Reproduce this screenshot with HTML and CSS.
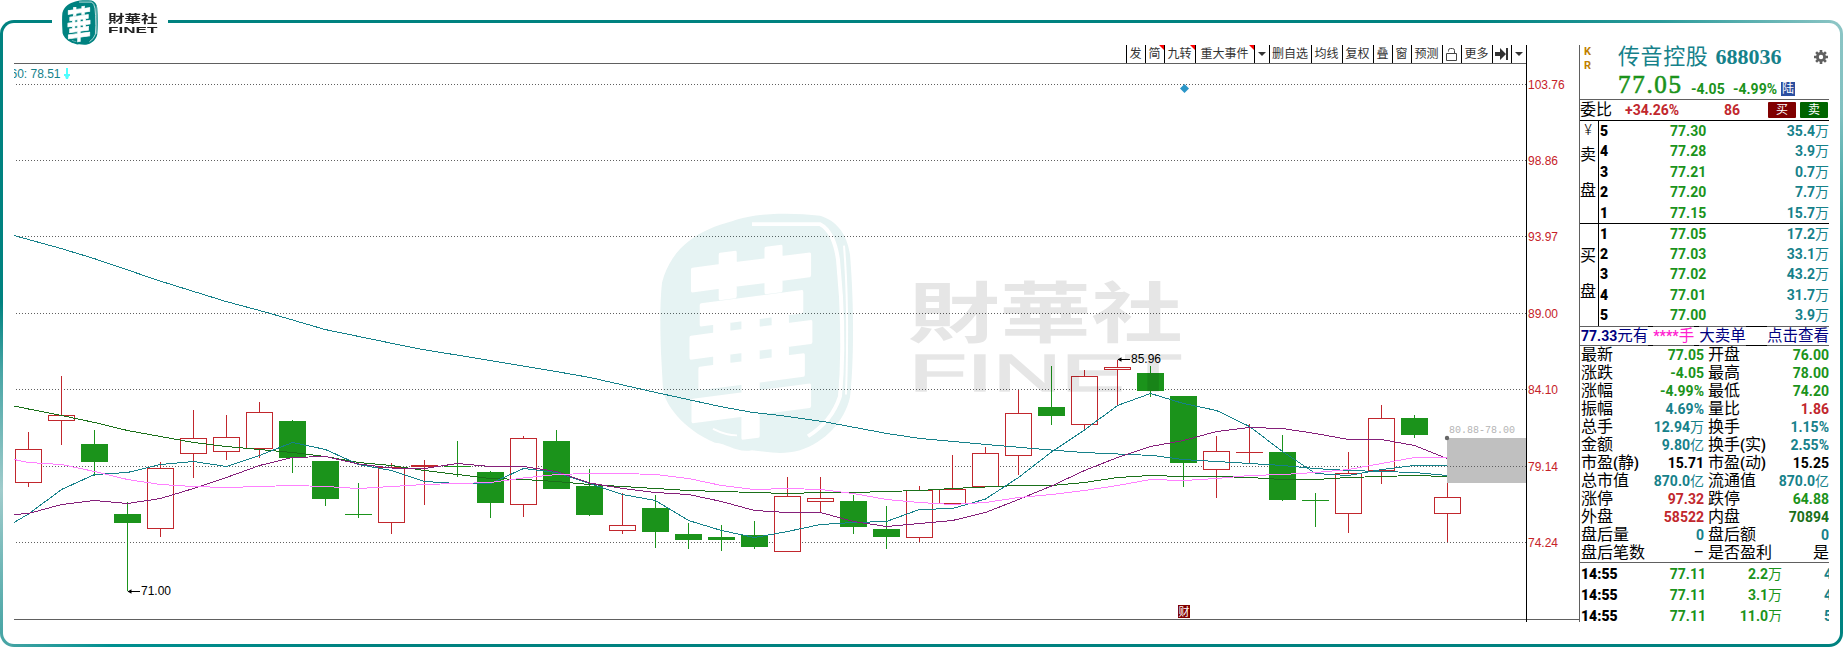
FILE: index.html
```html
<!DOCTYPE html>
<html lang="zh-CN">
<head>
    <meta charset="UTF-8" />
    <meta name="viewport" content="width=device-width, initial-scale=1" />
    <title>传音控股 688036</title>
    <link rel="stylesheet" href="styles.css">
</head>
<body>
    <svg class="defs" width="0" height="0">
        <defs>
            <mask id="sealMask">
                <path fill="#fff" d="M72 9 C92 0 130 -1 160 3 C176 8 187 22 190 45 C195 110 193 170 190 198 C184 225 165 246 140 255 C120 261 105 256 92 255 C76 258 68 248 55 247 C22 232 5 205 3 190 L1 150 C0 120 0 95 2 75 C12 35 40 18 72 9 Z" />
                <g transform="translate(91 0) skewY(-8) scale(.88 1.42)">
                    <text class="seal-char" x="0" y="156" text-anchor="middle">華</text>
                </g>
                <path fill="none" stroke="#000" stroke-width="4" d="M92 12 H160 Q174 20 178 50 L181 90 Q184 150 180 197 Q172 224 148 240" />
                <path fill="none" stroke="#000" stroke-width="2" d="M184 35 Q189 100 186 195 M53 232 Q66 239 77 239" />
            </mask>
            <g id="seal">
                <rect width="194" height="259" mask="url(#sealMask)" />
            </g>
        </defs>
    </svg>

    <div class="frame">
        <div class="brand">
            <svg class="brand-seal" width="36" height="45" viewBox="0 0 194 259" preserveAspectRatio="none"><use href="#seal" /></svg>
            <div class="brand-name">
                <span class="brand-cn">財華社</span>
                <span class="brand-en">FINET</span>
            </div>
        </div>

        <div class="terminal">
            <div class="chart">
                <div class="toolbar">
                    <span class="tool w19">发</span>
                    <span class="tool w19 hot">简</span>
                    <span class="tool w31 hot">九转</span>
                    <span class="tool w59 hot">重大事件</span>
                    <span class="tool w15"><i class="caret"></i></span>
                    <span class="tool w42">删自选</span>
                    <span class="tool w31">均线</span>
                    <span class="tool w31">复权</span>
                    <span class="tool w19">叠</span>
                    <span class="tool w19">窗</span>
                    <span class="tool w31">预测</span>
                    <span class="tool w19"><svg width="13" height="15" viewBox="0 0 13 15"><path class="icon-line" d="M1.5 6.5h10v7h-10zM3.5 4.5v-1q0-2 2-2h2q2 0 2 2v3" /></svg></span>
                    <span class="tool w31">更多</span>
                    <span class="tool w19"><svg width="14" height="12" viewBox="0 0 14 12"><path class="icon-fill" d="M0 4h5V0l6 6-6 6V8H0zM11 0h2v12h-2z" /></svg></span>
                    <span class="tool w15"><i class="caret"></i></span>
                </div>
                <svg id="kline" class="kline" width="1565" height="559" viewBox="14 63 1565 559">
                    <path class="rule" d="M14 63.5H1526M14 619.5H1579" />
                    <rect class="gap" x="1447" y="438" width="79" height="45" />
                    <g id="grid"></g>
                    <g id="candles"></g>
                    <g id="averages"></g>
                    <path class="axis" d="M1526.5 63V622" />
                    <circle class="gap-dot" cx="1447" cy="438" r="2.2" />
                    <text class="gap-text" x="1449" y="433">80.88-78.00</text>
                    <path class="mark" d="M128 591.5H140M1118 359.5H1130" />
                    <path class="mark-head" d="M127.500 591.5l4-2.200v4.400zM1117.500 359.5l4-2.200v4.400z" />
                    <text class="note" x="141" y="595">71.00</text>
                    <text class="note" x="1131" y="363">85.96</text>
                    <text class="ma-text" x="10.500" y="78">60: 78.51</text>
                    <path class="ma-arrow" d="M66 68h2v6h2v2h-1l-1 3h-2l-1-3h-1v-2h2z" />
                    <path class="diamond" d="M1184.500 84l4.500 4.500-4.500 4.500-4.500-4.500z" />
                    <rect class="report" x="1178" y="605" width="12" height="13" />
                    <text class="report-text" x="1178.500" y="615.500">财</text>
                    <g class="watermark">
                        <svg x="660" y="213" width="194" height="241" viewBox="0 0 194 259" preserveAspectRatio="none" class="wm-seal"><use href="#seal" /></svg>
                        <text class="wm-cn" x="908" y="337" textLength="275" lengthAdjust="spacingAndGlyphs">財華社</text>
                        <text class="wm-en" x="909" y="391" textLength="273" lengthAdjust="spacingAndGlyphs">FINET</text>
                    </g>
                </svg>
            </div>

            <div class="quote">
                <div class="head">
                    <div class="flags"><span>K</span><span>R</span></div>
                    <div class="title">
                        <div class="name"><span>传音控股</span><b>688036</b></div>
                        <div class="price"><span class="last">77.05</span><span class="chg">-4.05</span><span class="pct">-4.99%</span><span class="tag">陆</span></div>
                    </div>
                    <svg class="gear" width="14" height="14" viewBox="-7 -7 14 14">
                        <circle r="3.600" fill="none" stroke="#606060" stroke-width="2.800" />
                        <path stroke="#606060" stroke-width="2.600" d="M0-7v3M0 7v-3M-7 0h3M7 0h-3M-4.900-4.900l2 2M4.900 4.900l-2-2M-4.900 4.900l2-2M4.900-4.900l-2 2" />
                    </svg>
                </div>
                <div class="ratio"><span class="cjk">委比</span><span class="red wb">+34.26%</span><span class="red wc">86</span><span class="btn buy">买</span><span class="btn sell">卖</span></div>

                <div class="book asks">
                    <div class="side"><small>¥</small><span>卖</span><span>盘</span></div>
                    <div class="levels">
                        <div class="level"><b>5</b><span>77.30</span><em>35.4<i>万</i></em></div>
                        <div class="level"><b>4</b><span>77.28</span><em>3.9<i>万</i></em></div>
                        <div class="level"><b>3</b><span>77.21</span><em>0.7<i>万</i></em></div>
                        <div class="level"><b>2</b><span>77.20</span><em>7.7<i>万</i></em></div>
                        <div class="level"><b>1</b><span>77.15</span><em>15.7<i>万</i></em></div>
                    </div>
                </div>
                <div class="book bids">
                    <div class="side"><span>买</span><span>盘</span></div>
                    <div class="levels">
                        <div class="level"><b>1</b><span>77.05</span><em>17.2<i>万</i></em></div>
                        <div class="level"><b>2</b><span>77.03</span><em>33.1<i>万</i></em></div>
                        <div class="level"><b>3</b><span>77.02</span><em>43.2<i>万</i></em></div>
                        <div class="level"><b>4</b><span>77.01</span><em>31.7<i>万</i></em></div>
                        <div class="level"><b>5</b><span>77.00</span><em>3.9<i>万</i></em></div>
                    </div>
                </div>

                <div class="alert"><b>77.33</b><span>元有</span><u></u><span class="hidden-lots"><b>****</b>手</span><u></u><span>大卖单</span><u class="long"></u><span>点击查看</span></div>

                <div class="stats">
                    <div><label>最新</label><span class="green">77.05</span></div><div><label>开盘</label><span class="green">76.00</span></div>
                    <div><label>涨跌</label><span class="green">-4.05</span></div><div><label>最高</label><span class="green">78.00</span></div>
                    <div><label>涨幅</label><span class="green">-4.99%</span></div><div><label>最低</label><span class="green">74.20</span></div>
                    <div><label>振幅</label><span class="teal">4.69%</span></div><div><label>量比</label><span class="red">1.86</span></div>
                    <div><label>总手</label><span class="teal">12.94<i>万</i></span></div><div><label>换手</label><span class="teal">1.15%</span></div>
                    <div><label>金额</label><span class="teal">9.80<i>亿</i></span></div><div><label>换手<b>(</b>实<b>)</b></label><span class="teal">2.55%</span></div>
                    <div><label>市盈<b>(</b>静<b>)</b></label><span>15.71</span></div><div><label>市盈<b>(</b>动<b>)</b></label><span>15.25</span></div>
                    <div><label>总市值</label><span class="teal">870.0<i>亿</i></span></div><div><label>流通值</label><span class="teal">870.0<i>亿</i></span></div>
                    <div><label>涨停</label><span class="red">97.32</span></div><div><label>跌停</label><span class="green">64.88</span></div>
                    <div><label>外盘</label><span class="red">58522</span></div><div><label>内盘</label><span class="dark-green">70894</span></div>
                    <div><label>盘后量</label><span class="teal">0</span></div><div><label>盘后额</label><span class="teal">0</span></div>
                    <div><label>盘后笔数</label><span class="thin">–</span></div><div><label>是否盈利</label><span class="thin">是</span></div>
                </div>

                <div class="ticks">
                    <div class="tick"><b>14:55</b><span>77.11</span><em>2.2<i>万</i></em><s>4</s></div>
                    <div class="tick"><b>14:55</b><span>77.11</span><em>3.1<i>万</i></em><s>4</s></div>
                    <div class="tick"><b>14:55</b><span>77.11</span><em>11.0<i>万</i></em><s>5</s></div>
                </div>
            </div>
        </div>
    </div>

    <script>
        const NS = 'http://www.w3.org/2000/svg';
        const FIRST_X = 28.5;
        const STEP = 33;

        // price labels of the grid: [y, price]
        const levels = [[84, '103.76'], [160, '98.86'], [236, '93.97'], [313, '89.00'], [389, '84.10'], [466, '79.14'], [542, '74.24']];

        // [direction, high, body top, body bottom, low]
        const candles = [
            ['up', 432, 449, 483, 487], ['up', 376, 415, 421, 445], ['down', 430, 444, 462, 476], ['down', 502, 514, 523, 591],
            ['up', 462, 468, 529, 537], ['up', 410, 438, 454, 478], ['up', 415, 437, 452, 460], ['up', 402, 412, 449, 458],
            ['down', 420, 421, 458, 473], ['down', 461, 461, 499, 506], ['down', 483, 514, 515, 518], ['up', 463, 467, 523, 534],
            ['up', 460, 465, 467, 505], ['down', 441, 466, 467, 477], ['down', 471, 472, 503, 518], ['up', 436, 438, 505, 517],
            ['down', 430, 441, 489, 489], ['down', 469, 486, 515, 516], ['up', 493, 525, 531, 534], ['down', 495, 508, 532, 548],
            ['down', 523, 534, 540, 549], ['down', 525, 537, 540, 551], ['down', 521, 535, 547, 549], ['up', 477, 496, 552, 552],
            ['up', 477, 498, 502, 512], ['down', 495, 501, 527, 534], ['down', 506, 529, 537, 549], ['up', 486, 490, 538, 542],
            ['up', 455, 489, 504, 504], ['up', 447, 453, 487, 487], ['up', 390, 413, 456, 475], ['down', 366, 407, 416, 425],
            ['up', 370, 376, 425, 430], ['up', 360, 367, 370, 406], ['down', 366, 373, 391, 397], ['down', 396, 396, 463, 487],
            ['up', 436, 451, 470, 498], ['up', 424, 452, 453, 463], ['down', 435, 452, 500, 501], ['down', 493, 500, 501, 527],
            ['up', 452, 473, 514, 533], ['up', 405, 418, 471, 484], ['down', 415, 418, 435, 438], ['up', 483, 497, 514, 542]
        ];

        // one y per candle, the first value is at the left edge
        const averages = {
            green: [406, 409, 415.5, 422.5, 430.5, 436.5, 442.5, 446.5, 449.5, 452.5, 456.5, 462.5, 465.5, 470.5, 474.5, 478.5, 479.5, 481.5, 484.5, 486.5, 488.5, 490.5, 491.5, 492.5, 493.5, 492.5, 492.5, 491.5, 490.5, 488.5, 487, 485.5, 485.5, 482.5, 477.5, 475.5, 476.5, 476.5, 477.5, 479.5, 479.5, 477.5, 476.5, 475.5, 476.5],
            teal: [522.5, 514, 489.5, 474.5, 472.5, 464.5, 461.5, 466.5, 455.5, 442.5, 449.5, 464.5, 470.5, 481.5, 483.5, 483.5, 468.5, 472.5, 483.5, 494.5, 500.5, 520.5, 530.5, 537.5, 531.5, 524.5, 522.5, 521.5, 509.5, 508.5, 499, 477.5, 452, 430, 405.5, 393.5, 403.5, 410.5, 426.5, 451.5, 473.5, 475.5, 469.5, 465.5, 465.5],
            purple: [514.5, 513.5, 504.5, 500.5, 503.5, 498.5, 488.5, 477.5, 465.5, 457.5, 456.5, 464, 468, 468.5, 463.5, 466.5, 466.5, 471.5, 483, 488.5, 492.5, 494.5, 501.5, 510.5, 512.5, 512.5, 521.5, 526.5, 523.5, 520.5, 512.5, 499.5, 486, 470.5, 457.5, 446.5, 440.5, 431.5, 427.5, 428.5, 433.5, 439.5, 439.5, 445.5, 458.5],
            pink: [459.5, 462.5, 464.5, 471.5, 479.5, 484.5, 486.5, 487.5, 486.5, 485.5, 486.5, 488.5, 486.5, 484.5, 483.5, 482.5, 478, 474.5, 473.5, 473.5, 474.5, 478.5, 485.5, 489.5, 488.5, 489.5, 493.5, 499.5, 502.5, 504.5, 502.5, 497.5, 494.5, 490.5, 485.5, 479.5, 480.5, 478.5, 475.5, 474.5, 472.5, 469.5, 463.5, 457.5, 457.5]
        };
        const ma60 = '14,235.5 61,248.5 94,258.5 160,281 226,301.5 267,312.5 325,329.5 417,348.5 490,360.5 556,371.5 590,377.5 656,392.5 720,406.5 753,412.5 780,415.5 823,421.5 887,433.5 920,438.5 986,444.5 1051,450 1083,452.5 1153,455.5 1183,459.5 1216,461.5 1250,463.5 1283,465.5 1315,468.5 1348,470.5 1381,471.5 1415,472.5 1447,475.5';

        function add(parent, tag, attrs, text) {
            const el = document.createElementNS(NS, tag);
            for (const key in attrs) el.setAttribute(key, attrs[key]);
            if (text) el.textContent = text;
            document.getElementById(parent).appendChild(el);
        }

        levels.forEach(([y, price]) => {
            add('grid', 'path', { class: 'dots', d: 'M16 ' + (y + 0.5) + 'H1526' });
            add('grid', 'text', { class: 'price-label', x: 1528, y: y + 5 }, price);
        });

        candles.forEach(([dir, high, top, bottom, low], i) => {
            const x = FIRST_X + i * STEP;
            if (high < top) add('candles', 'path', { class: dir, d: 'M' + x + ' ' + high + 'V' + top });
            if (low > bottom) add('candles', 'path', { class: dir, d: 'M' + x + ' ' + bottom + 'V' + low });
            if (bottom - top < 2) {
                add('candles', 'path', { class: dir, d: 'M' + (x - 13.5) + ' ' + (top + 0.5) + 'h27' });
            } else {
                add('candles', 'rect', { class: dir, x: x - 13, y: top + 0.5, width: 26, height: bottom - top - 1 });
            }
        });

        add('averages', 'polyline', { class: 'teal', points: ma60 });
        for (const name in averages) {
            const points = averages[name].map((y, i) => (i === 0 ? 14 : Math.min(FIRST_X + (i - 1) * STEP, 1447)) + ',' + y);
            add('averages', 'polyline', { class: name, points: points.join(' ') });
        }
    </script>
</body>
</html>
```
FILE: styles.css
```css
* {
    box-sizing: border-box;
}
body {
    margin: 0;
    height: 667px;
    overflow: hidden;
    background: #fff;
    font-family: Roboto, "Noto Sans CJK SC", sans-serif;
}
i, em {
    font-style: normal;
}
.defs {
    position: absolute;
}
.frame {
    position: relative;
    margin-top: 20px;
    width: 1843px;
    height: 627px;
    padding: 22px 11px;
    border: 3px solid transparent;
    border-radius: 14px;
    background:
        linear-gradient(#fff, #fff) padding-box,
        linear-gradient(#008280 45%, #48a5a5 56%, #a0cccc 75%, #48a5a5 98%) left / 12px 100% no-repeat border-box,
        linear-gradient(#8cc5c5, #80c0c0 15%, #008c8a 45%, #008280) right / 12px 100% no-repeat border-box,
        linear-gradient(90deg, #008280 80%, #2a9a9a 90%, #8cc5c5) top / 100% 12px no-repeat border-box,
        linear-gradient(90deg, #48a5a5, #009090 6%, #008280 20%) bottom / 100% 12px no-repeat border-box;
}

/* logo over the frame's top edge */
.brand {
    position: absolute;
    left: 49px;
    top: -23px;
    width: 116px;
    height: 46px;
    padding-left: 10px;
    display: flex;
    gap: 10px;
    background: #fff;
}
.brand-seal {
    fill: #008280;
}
.brand-name {
    width: 50px;
    padding-top: 12px;
    color: #222;
}
.brand-name span {
    display: block;
    transform-origin: 0 0;
    white-space: nowrap;
}
.seal-char {
    font: bold 150px "Noto Sans CJK TC", sans-serif;
    fill: #000;
    stroke: #000;
    stroke-width: 3;
    stroke-linejoin: round;
}
.brand-cn {
    height: 13px;
    font: bold 11px/12px "Noto Sans CJK TC", sans-serif;
    transform: scaleX(1.5);
}
.brand-en {
    font: bold 9.5px/10px "Liberation Sans", sans-serif;
    transform: scaleX(1.8);
}

.terminal {
    display: flex;
    height: 577px;
}
.chart {
    width: 1565px;
}
.toolbar {
    display: flex;
    justify-content: flex-end;
    width: 1513px;
    height: 18px;
    border-right: 1px solid #000;
}
.tool {
    position: relative;
    display: flex;
    align-items: center;
    justify-content: center;
    padding-right: 1px;
    border-left: 1px solid #000;
    color: #333;
    font-size: 12px;
    line-height: 18px;
    white-space: nowrap;
}
.w15 { width: 15px; }
.w19 { width: 19px; }
.w31 { width: 31px; }
.w42 { width: 42px; }
.w59 { width: 59px; }
.hot::after {
    content: "";
    position: absolute;
    right: 0;
    top: 0;
    border-top: 5px solid #f00;
    border-left: 5px solid transparent;
}
.caret {
    border: 4px solid transparent;
    border-top-color: #333;
    border-bottom: 0;
}
.icon-line {
    fill: none;
    stroke: #444;
}
.icon-fill {
    fill: #333;
}

.kline {
    display: block;
    font: 12px "Liberation Sans", sans-serif;
}
.rule, .dots {
    stroke: #606060;
    shape-rendering: crispEdges;
}
.dots {
    stroke-dasharray: 1 2;
}
.axis {
    stroke: #000;
    shape-rendering: crispEdges;
}
.price-label {
    fill: #c62228;
}
.up {
    fill: #fff;
    stroke: #c1272d;
    shape-rendering: crispEdges;
}
.down {
    fill: #1b931b;
    stroke: #1b931b;
    shape-rendering: crispEdges;
}
#averages polyline {
    fill: none;
    shape-rendering: crispEdges;
}
#averages .green { stroke: #1a701a; }
#averages .teal { stroke: #16818a; }
#averages .purple { stroke: #85207a; }
#averages .pink { stroke: #ff80ff; }
.gap {
    fill: #c0c0c0;
}
.gap-dot {
    fill: #666;
}
.gap-text {
    font: 10px "Liberation Mono", monospace;
    fill: #b4b4b4;
}
.mark {
    stroke: #000;
}
.ma-text {
    fill: #16818a;
}
.ma-arrow {
    fill: #50ffff;
}
.diamond {
    fill: #2b96c8;
}
.report {
    fill: #800000;
}
.report-text {
    font: 11px "Noto Sans CJK SC", sans-serif;
    fill: #fff;
}
.watermark {
    opacity: .1;
}
.wm-seal {
    fill: #008280;
}
.wm-cn {
    font: bold 66px "Noto Sans CJK TC", sans-serif;
}
.wm-en {
    font: 52px "Liberation Sans", sans-serif;
    stroke: #000;
    stroke-width: 1.5;
}

/* quote panel */
.quote {
    width: 250px;
    border-left: 1px solid #606060;
    overflow: hidden;
    font-size: 14px;
    font-weight: bold;
    line-height: 18px;
    white-space: nowrap;
}
.green { color: #1b931b; }
.dark-green { color: #1a701a; }
.teal { color: #16818a; }
.red { color: #c1272d; }
.head {
    display: flex;
    height: 55px;
    border-bottom: 1px solid #606060;
}
.flags {
    width: 38px;
    padding: 0 0 0 4px;
    color: #c08000;
    font-size: 11px;
    line-height: 14px;
}
.flags span {
    display: block;
}
.title {
    width: 196px;
}
.name {
    display: flex;
    gap: 7px;
    height: 27px;
    color: #16818a;
    font: 22px/24px "Liberation Serif", "Noto Sans CJK SC", serif;
}
.name span {
    letter-spacing: .6px;
}
.price {
    display: flex;
    height: 27px;
    color: #1b931b;
    line-height: 34px;
}
.last {
    width: 73px;
    font: 25px/26px "Liberation Serif", serif;
    letter-spacing: 1.7px;
    -webkit-text-stroke: .6px #1b931b;
}
.chg {
    width: 42px;
}
.pct {
    width: 48px;
}
.tag {
    width: 14px;
    height: 14px;
    margin-top: 10px;
    background: #2c4fa0;
    color: #fff;
    font-size: 12px;
    font-weight: normal;
    line-height: 14px;
    text-align: center;
}
.gear {
    margin-top: 5px;
}
.ratio {
    display: flex;
    align-items: center;
    height: 21px;
    border-bottom: 1px solid #000;
}
.cjk {
    width: 45px;
    font-size: 16px;
    font-weight: normal;
}
.wb { width: 99px; }
.wc { width: 44px; }
.btn {
    flex: none;
    width: 28px;
    height: 16px;
    margin-right: 4px;
    border-radius: 1px;
    color: #fff;
    font-size: 12px;
    font-weight: normal;
    line-height: 16px;
    text-align: center;
}
.btn:last-child {
    margin-right: 0;
}
.buy { background: #800000; }
.sell { background: #006400; }

.book {
    display: flex;
    height: 102px;
}
.asks {
    height: 103px;
    border-bottom: 1px solid #000;
}
.side {
    display: flex;
    flex-direction: column;
    align-items: center;
    gap: 18px;
    width: 19px;
    padding-right: 2px;
    border-right: 1px solid #000;
    font-size: 16px;
    font-weight: normal;
}
.side small {
    margin-bottom: -11px;
    font-size: 14px;
    font-weight: 300;
}
.bids .side {
    padding-top: 23px;
}
.levels {
    flex: 1;
    display: grid;
    grid-template-rows: repeat(5, 1fr);
}
.bids .levels {
    height: 101px;
}
.level {
    display: grid;
    grid-template-columns: 70px 36px 1fr;
    align-items: center;
    height: 20px;
    padding-left: 1px;
}
.level span, .tick span {
    color: #1b931b;
    text-align: right;
}
.level em {
    color: #16818a;
    text-align: right;
}
.level i, .stats i, .tick i {
    font-size: 14px;
    font-weight: normal;
}

.alert {
    display: flex;
    height: 20px;
    padding-left: 1px;
    border-top: 1px solid #606060;
    border-bottom: 1px solid #606060;
    color: #000080;
    font-size: 15.5px;
    font-weight: normal;
    line-height: 18px;
}
.alert b {
    font-size: 14px;
}
.alert u {
    width: 5px;
    margin: -1px 0;
    border-top: 1px solid #000;
    border-bottom: 1px solid #000;
}
.alert .long {
    flex: 1;
}
.hidden-lots {
    color: #ff20d0;
}

.stats {
    display: grid;
    grid-template-columns: 124px 125px;
    grid-auto-rows: 18px;
    height: 217px;
    border-bottom: 1px solid #606060;
}
.stats div {
    display: flex;
    justify-content: space-between;
    padding-left: 1px;
}
.stats div:nth-child(even) {
    padding-left: 4px;
}
.stats label {
    font-size: 16px;
    font-weight: normal;
}
.stats label b {
    font-size: 14px;
}
.stats .thin {
    font-size: 16px;
    font-weight: normal;
}

.tick {
    display: grid;
    grid-template-columns: 60px 65px 76px 1fr;
    align-items: center;
    height: 21.3px;
    padding-left: 1px;
}
.tick em {
    color: #1b931b;
    text-align: right;
}
.tick s {
    margin-left: 42px;
    color: #16818a;
    text-decoration: none;
}
```
